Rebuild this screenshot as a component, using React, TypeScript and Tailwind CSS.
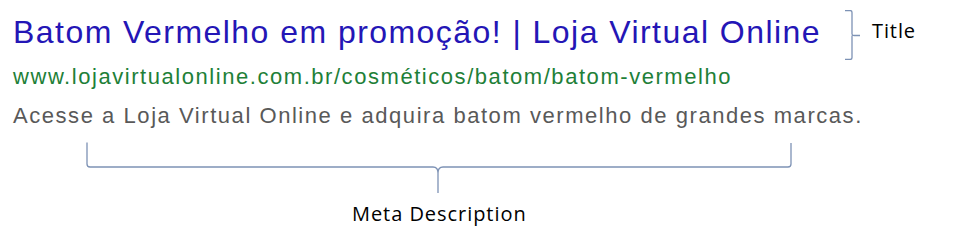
export default function App() {
  return (
    <div className="relative h-[244px] w-[976px] overflow-hidden bg-white">
      <div className="flex flex-col pl-[13px] pt-[14px] font-['Liberation_Sans',Arial,sans-serif]">
        <h1 className="text-[32px] leading-[36px] tracking-[1.45px] text-[#2416b6]">
          Batom Vermelho em promoção! | Loja Virtual Online
        </h1>
        <p className="mt-[15px] text-[22px] leading-[24px] tracking-[1.55px] text-[#1e8038]">
          www.lojavirtualonline.com.br/cosméticos/batom/batom-vermelho
        </p>
        <p className="mt-[15px] text-[22px] leading-[24px] tracking-[1.55px] text-[#595959]">
          Acesse a Loja Virtual Online e adquira batom vermelho de grandes marcas.
        </p>
      </div>

      {/* title brace */}
      <div className="absolute left-[844px] top-[10px] flex items-start">
        <svg width="18" height="50" viewBox="0 0 18 50" fill="none">
          <path
            d="M1 0.5 H6 Q8 0.5 8 2.5 V24 Q8 25.5 10 25.5 H16 M8 25.5 V47.5 Q8 49.5 6 49.5 H1"
            stroke="#7d92b5"
            strokeWidth="1.3"
          />
        </svg>
        <span className="ml-[10px] mt-[8px] font-['Open_Sans',sans-serif] text-[20px] leading-[26px] tracking-[0.9px] text-black">
          Title
        </span>
      </div>

      {/* description brace */}
      <div className="absolute left-[86px] top-[142px] flex flex-col items-start">
        <svg width="708" height="52" viewBox="0 0 708 52" fill="none">
          <path
            d="M1 0.5 V22 Q1 25 4 25 H347 Q352 25 352 31 V51 M352 31 Q352 25 357 25 H702 Q705 25 705 22 V1"
            stroke="#7d92b5"
            strokeWidth="1.3"
          />
        </svg>
        <span className="ml-[266px] mt-[7px] font-['Open_Sans',sans-serif] text-[20px] leading-[26px] tracking-[0.95px] text-black">
          Meta Description
        </span>
      </div>
    </div>
  );
}
